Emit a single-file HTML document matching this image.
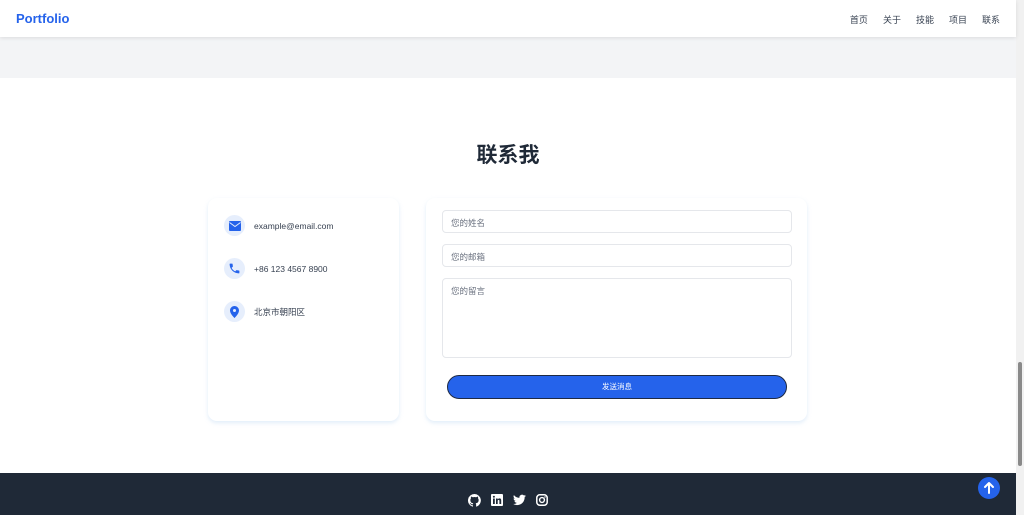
<!DOCTYPE html>
<html><head><meta charset="utf-8"><style>
*{box-sizing:border-box;margin:0;padding:0}
body{width:1024px;height:515px;overflow:hidden;font-family:"Liberation Sans","Noto Sans CJK SC",sans-serif;background:#fff;position:relative}
.nav{position:absolute;left:0;top:0;width:1016px;height:37px;background:#fff;box-shadow:0 1px 4px rgba(0,0,0,.1);z-index:2}
.logo{position:absolute;left:16px;top:11px;font-size:13px;font-weight:bold;color:#2563eb}
.links{position:absolute;right:16px;top:13px;font-size:9px;color:#374151}
.links span{margin-left:15px}
.band{position:absolute;top:37px;left:0;width:1016px;height:41px;background:#f3f4f6}
h2{position:absolute;top:139px;left:0;width:1016px;text-align:center;font-size:21px;color:#1f2937}
.card{position:absolute;background:#fff;border-radius:9px;box-shadow:0 2px 4px rgba(180,210,240,.4)}
.item{position:absolute;left:16px;display:flex;align-items:center;font-size:8.5px;color:#374151}
.ic{width:21px;height:21px;border-radius:50%;background:#e6eefc;display:flex;align-items:center;justify-content:center;margin-right:9px}
.in{position:absolute;left:16px;width:350px;border:1px solid #e5e7eb;border-radius:4px;font-size:8.5px;color:#6b7280;padding:6px 8px}
.btn{position:absolute;left:21px;top:177px;width:340px;height:24px;background:#2563eb;border:1.5px solid #1e2a44;border-radius:12px;color:#fff;font-size:7.5px;text-align:center;line-height:21px}
.foot{position:absolute;top:473px;left:0;width:1016px;height:42px;background:#1f2937}
.sb{position:absolute;right:0;top:0;width:8px;height:515px;background:#f1f1f1}
.th{position:absolute;left:2px;top:362px;width:4px;height:104px;background:#8a8a8a;border-radius:2px}
.up{position:absolute;left:978px;top:477px;width:22px;height:22px;border-radius:50%;background:#2563eb}
</style></head><body>
<div class="nav"><div class="logo">Portfolio</div><div class="links"><span>首页</span><span>关于</span><span>技能</span><span>项目</span><span>联系</span></div></div>
<div class="band"></div>
<h2>联系我</h2>
<div class="card" style="left:208px;top:198px;width:191px;height:223px">
<div class="item" style="top:17px"><div class="ic"><svg width="12" height="10" viewBox="0 0 12 10"><rect x="0" y="0" width="12" height="10" rx="1" fill="#2563eb"/><path d="M0.5 1.5 6 5.5 11.5 1.5" stroke="#e6eefc" stroke-width="1" fill="none"/></svg></div>example@email.com</div>
<div class="item" style="top:60px"><div class="ic"><svg width="13" height="13" viewBox="0 0 24 24"><path fill="#2563eb" d="M6.6 10.8c1.4 2.8 3.8 5.1 6.6 6.6l2.2-2.2c.3-.3.7-.4 1-.2 1.1.4 2.3.6 3.600.6.600 0 1 .4 1 1V20c0 .6-.4 1-1 1C10.6 21 3 13.4 3 4c0-.6.4-1 1-1h3.500c.600 0 1 .4 1 1 0 1.300.2 2.500.6 3.600.1.300 0 .700-.2 1z"/></svg></div>+86 123 4567 8900</div>
<div class="item" style="top:103px"><div class="ic"><svg width="9" height="12" viewBox="0 0 24 32"><path fill="#2563eb" d="M12 0C5.4 0 0 5.4 0 12c0 9 12 20 12 20s12-11 12-20C24 5.4 18.6 0 12 0zm0 16a4 4 0 1 1 0-8 4 4 0 0 1 0 8z"/></svg></div>北京市朝阳区</div>
</div>
<div class="card" style="left:426px;top:198px;width:381px;height:223px">
<div class="in" style="top:12px;height:23px">您的姓名</div>
<div class="in" style="top:46px;height:23px">您的邮箱</div>
<div class="in" style="top:80px;height:80px">您的留言</div>
<div class="btn">发送消息</div>
</div>
<div class="foot">
<svg style="position:absolute;left:468px;top:21px" width="13" height="13" viewBox="0 0 16 16"><path fill="#fff" d="M8 0a8 8 0 0 0-2.5 15.6c.4 0 .5-.2.5-.4v-1.5c-2.2.5-2.7-1-2.7-1-.4-.9-.9-1.2-.9-1.2-.7-.5.1-.5.1-.5.8.1 1.2.8 1.2.8.7 1.3 1.9.9 2.3.7.1-.5.3-.9.5-1.1-1.8-.2-3.6-.9-3.6-4 0-.9.3-1.6.8-2.1-.1-.2-.4-1 .1-2.1 0 0 .7-.2 2.2.8a7.500 7.500 0 0 1 4 0c1.5-1 2.2-.8 2.2-.8.4 1.1.2 1.900.1 2.100.5.6.8 1.300.8 2.100 0 3.1-1.900 3.800-3.700 4 .3.3.6.8.6 1.500v2.200c0 .2.1.5.6.4A8 8 0 0 0 8 0z"/></svg>
<svg style="position:absolute;left:491px;top:21px" width="12" height="12" viewBox="0 0 12 12"><rect width="12" height="12" rx="1" fill="#fff"/><rect x="2" y="4.5" width="1.8" height="5.5" fill="#1f2937"/><circle cx="2.9" cy="2.8" r="1" fill="#1f2937"/><path d="M5 4.5h1.7v1c.4-.7 1-1.1 1.900-1.100 1.300 0 1.600.9 1.600 2.100V10H8.4V7c0-.7-.2-1.100-.8-1.100-.6 0-.9.5-.9 1.100v3H5z" fill="#1f2937"/></svg>
<svg style="position:absolute;left:513px;top:21px" width="13" height="12" viewBox="0 0 24 20"><path fill="#fff" d="M24 2.4c-.9.4-1.800.7-2.800.8 1-.6 1.800-1.600 2.200-2.700-1 .6-2 1-3.100 1.200A4.900 4.900 0 0 0 11.900 6 14 14 0 0 1 1.700.9a4.900 4.900 0 0 0 1.500 6.600c-.8 0-1.600-.3-2.200-.6 0 2.400 1.700 4.400 3.900 4.800-.7.200-1.500.2-2.200.1.600 2 2.400 3.400 4.600 3.400A9.900 9.900 0 0 1 0 17.200 14 14 0 0 0 7.500 19.400c9.100 0 14-7.500 14-14v-.6c1-.7 1.800-1.600 2.500-2.400z"/></svg>
<svg style="position:absolute;left:536px;top:21px" width="12" height="12" viewBox="0 0 12 12"><rect x=".8" y=".8" width="10.4" height="10.4" rx="3" fill="none" stroke="#fff" stroke-width="1.5"/><circle cx="6" cy="6" r="2.4" fill="none" stroke="#fff" stroke-width="1.4"/><circle cx="9" cy="3" r=".7" fill="#fff"/></svg>
</div>
<div class="up"><svg width="22" height="22" viewBox="0 0 22 22"><path d="M11 16V6M7 10l4-4 4 4" stroke="#fff" stroke-width="2" fill="none" stroke-linecap="round" stroke-linejoin="round"/></svg></div>
<div class="sb"><div class="th"></div></div>
</body></html>
